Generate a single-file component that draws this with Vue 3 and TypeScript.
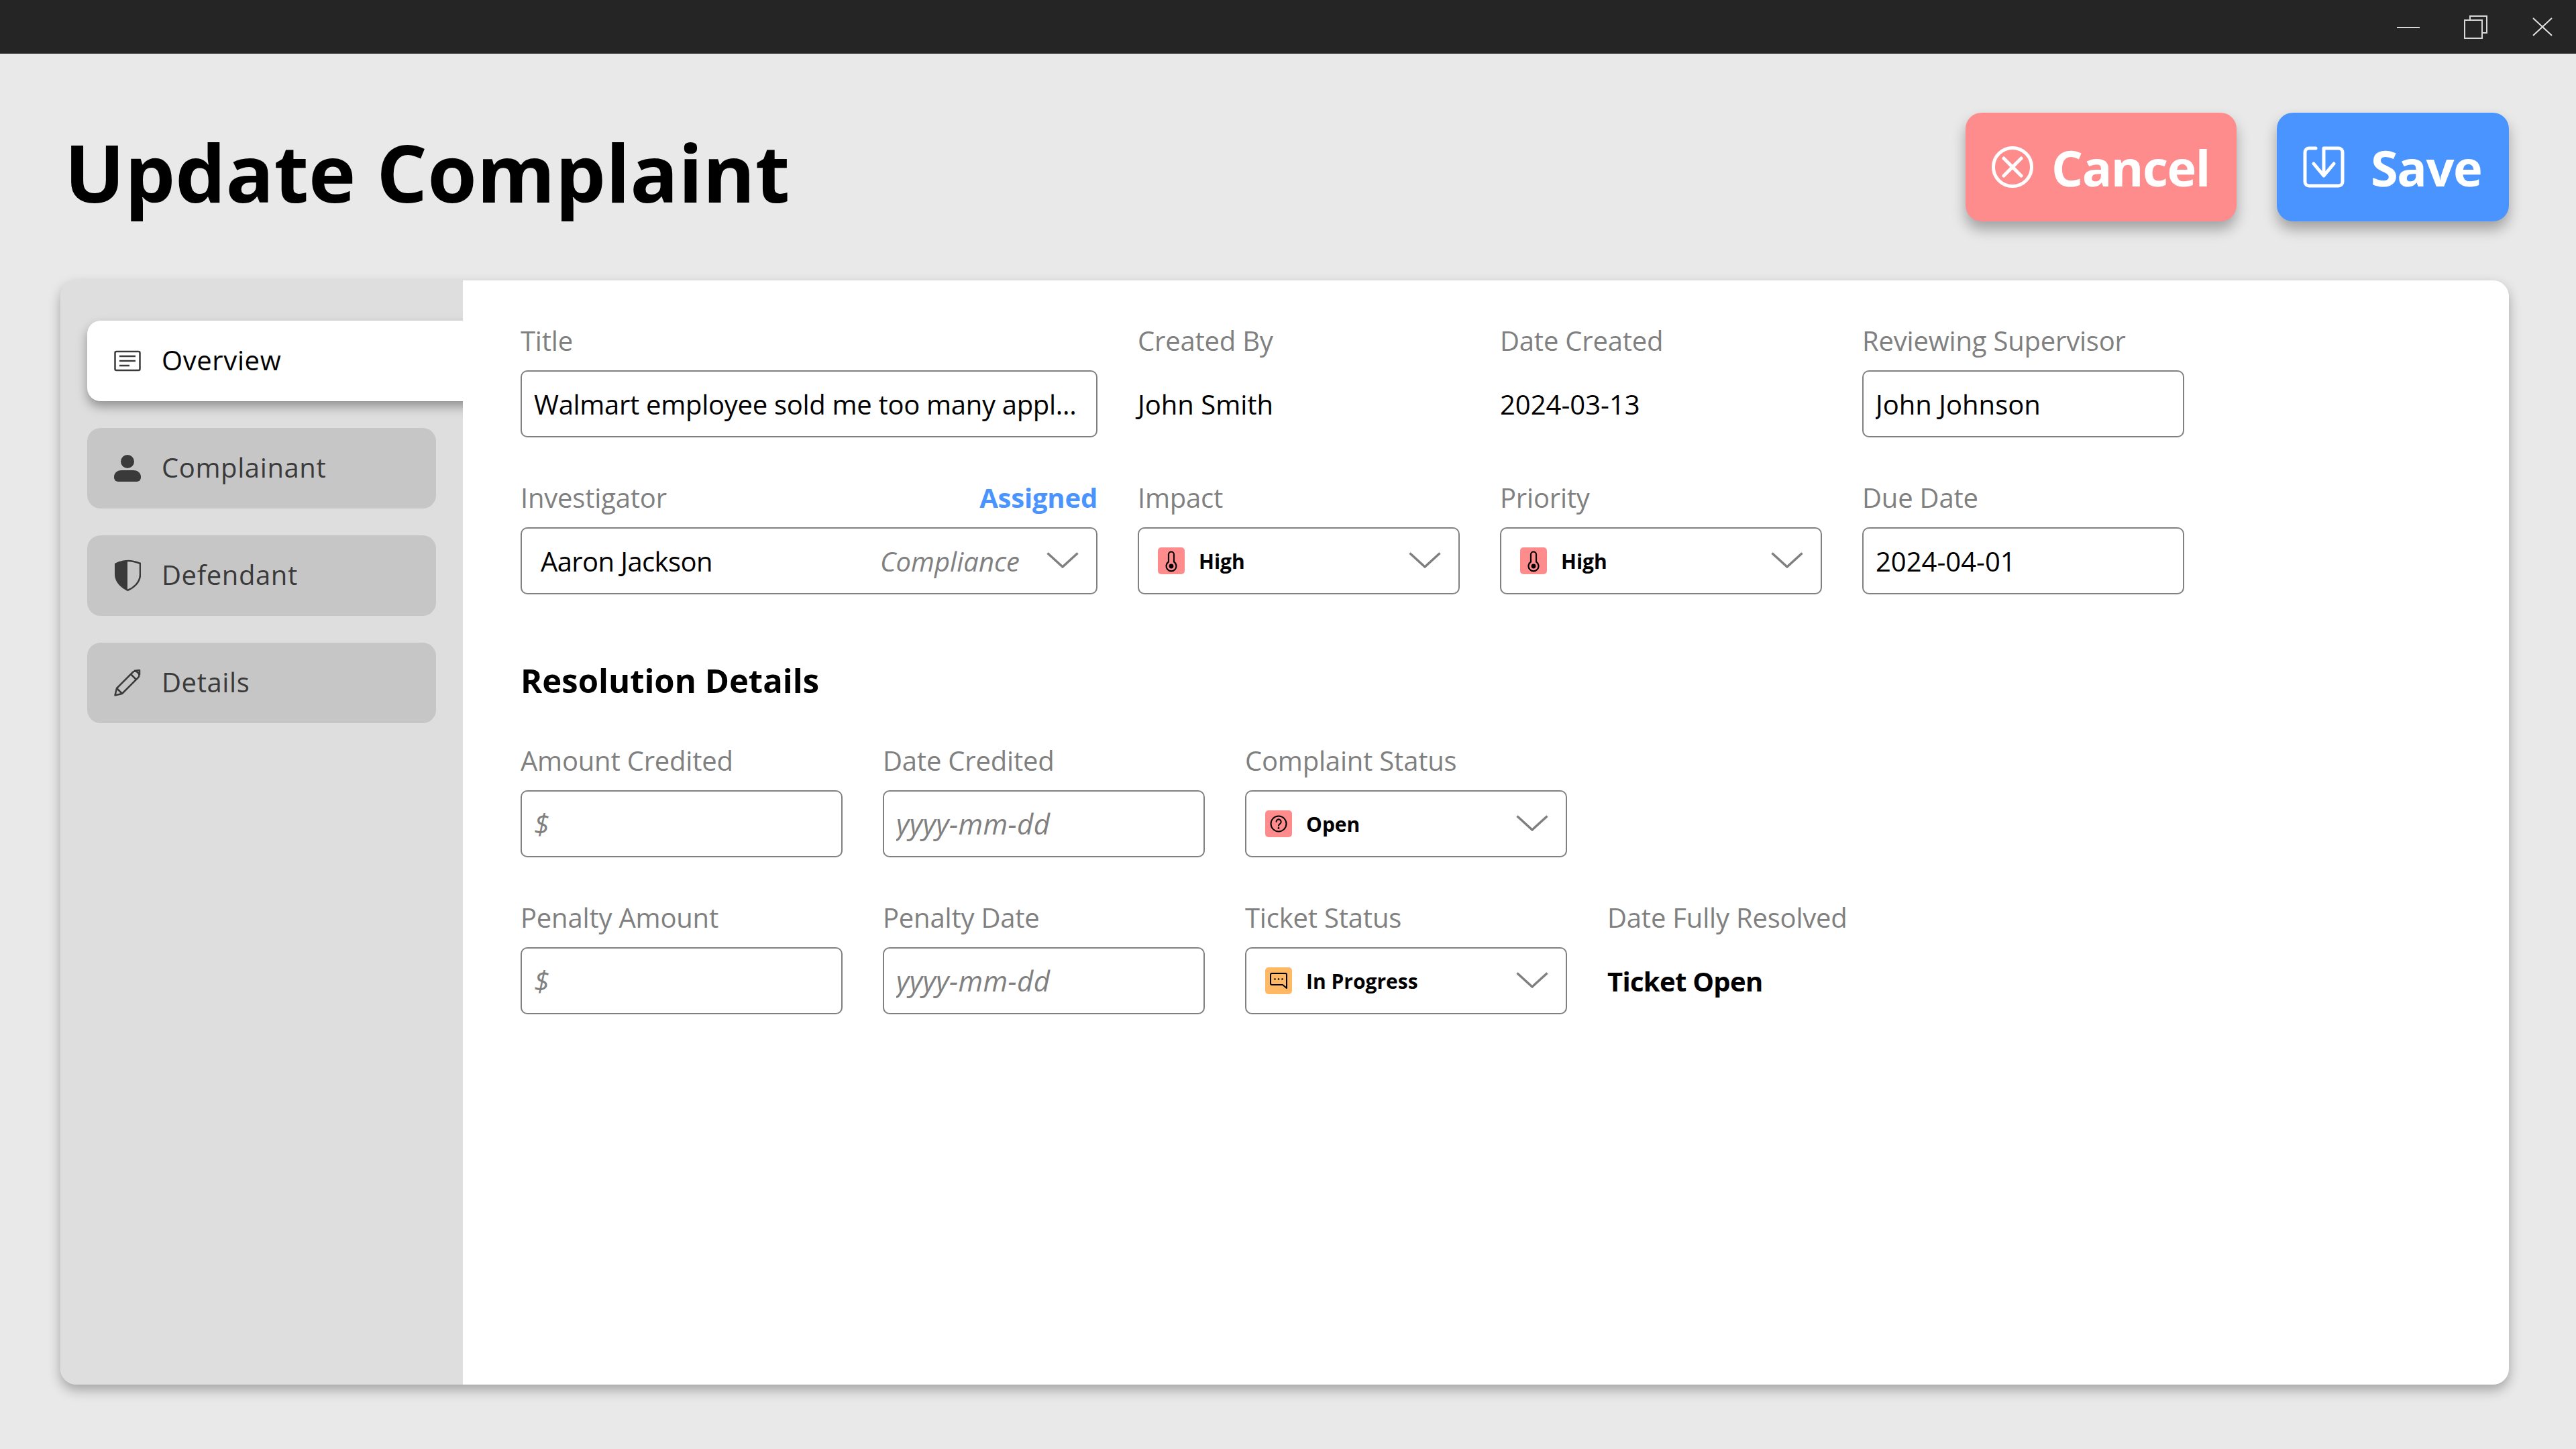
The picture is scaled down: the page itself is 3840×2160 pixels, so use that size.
<template>
  <div class="window">
    <!-- title bar -->
    <div class="titlebar">
      <button class="win-btn" aria-label="Minimize">
        <svg width="36" height="36" viewBox="0 0 36 36"><path d="M1 18H35" stroke="#d8d8d8" stroke-width="2" /></svg>
      </button>
      <button class="win-btn" aria-label="Restore">
        <svg width="36" height="36" viewBox="0 0 36 36" fill="none" stroke="#d8d8d8" stroke-width="2">
          <path d="M10 6V1H35V26H28" />
          <rect x="2" y="7" width="26" height="27" />
        </svg>
      </button>
      <button class="win-btn" aria-label="Close">
        <svg width="36" height="36" viewBox="0 0 36 36"><path d="M4 4L32 30M32 4L4 30" stroke="#e0e0e0" stroke-width="2" fill="none" /></svg>
      </button>
    </div>

    <div class="page">
      <header class="header">
        <h1 class="page-title">Update Complaint</h1>
        <div class="actions">
          <button class="action cancel">
            <svg width="62" height="62" viewBox="0 0 62 62" fill="none" stroke="#fff" stroke-width="5" stroke-linecap="round">
              <circle cx="31" cy="31" r="28.5" />
              <path d="M18 18L44 44M44 18L18 44" />
            </svg>
            <span>Cancel</span>
          </button>
          <button class="action save">
            <svg width="62" height="62" viewBox="0 0 62 62" fill="none" stroke="#fff" stroke-width="5" stroke-linecap="round" stroke-linejoin="round">
              <path d="M19 3H9a6 6 0 0 0-6 6V53a6 6 0 0 0 6 6H53a6 6 0 0 0 6-6V9a6 6 0 0 0-6-6H31V43" />
              <path d="M16 26L31 44L46 26" />
            </svg>
            <span>Save</span>
          </button>
        </div>
      </header>

      <section class="card">
        <nav class="sidebar">
          <div v-for="tab in tabs" :key="tab.name" class="tab" :class="{ active: tab.name === activeTab }">
            <svg v-if="tab.name === 'Overview'" class="tab-icon" width="40" height="40" viewBox="0 0 40 40" fill="none" stroke="currentColor" stroke-width="2.5">
              <rect x="1.5" y="6" width="37" height="28" rx="2" />
              <path d="M8 13H32M8 20H32M8 27H23" />
            </svg>
            <svg v-else-if="tab.name === 'Complainant'" class="tab-icon" width="40" height="40" viewBox="0 0 40 40" fill="currentColor">
              <circle cx="20" cy="10" r="10" />
              <path d="M0 33c0-7 6-10 11-10H29c5 0 11 3 11 10v1a6 6 0 0 1-6 6H6a6 6 0 0 1-6-6Z" />
            </svg>
            <svg v-else-if="tab.name === 'Defendant'" class="tab-icon" width="40" height="48" viewBox="0 0 40 48">
              <path d="M20 1C14 1 6 3 1 6V22C1 35 12 43 20 47Z" fill="currentColor" />
              <path d="M20 2C26 2 34 4 39 6V22C39 35 28 43 20 46" fill="none" stroke="currentColor" stroke-width="2.5" />
            </svg>
            <svg v-else class="tab-icon" width="40" height="40" viewBox="0 0 40 40" fill="none" stroke="currentColor" stroke-width="2.5" stroke-linejoin="round">
              <path d="M1.5 38.5L4 28L28 4C30 2 33 2 35.5 4.5S38 10 36 12L12 36Z" />
              <path d="M4 28L12 36M25 7L33 15M30 2L38 1L38 8" />
            </svg>
            <span>{{ tab.name }}</span>
          </div>
        </nav>

        <main class="content">
          <div class="grid top">
            <div class="field">
              <label>Title</label>
              <input class="box tight" type="text" value="Walmart employee sold me too many appl..." />
            </div>
            <div class="field">
              <label>Created By</label>
              <div class="value">John Smith</div>
            </div>
            <div class="field">
              <label>Date Created</label>
              <div class="value">2024-03-13</div>
            </div>
            <div class="field">
              <label>Reviewing Supervisor</label>
              <input class="box" type="text" value="John Johnson" />
            </div>

            <div class="field">
              <label class="split">Investigator <b class="assigned">Assigned</b></label>
              <div class="box select investigator">
                <span class="person">Aaron Jackson</span>
                <em class="dept">Compliance</em>
                <svg class="chevron" width="48" height="24" viewBox="0 0 48 24"><path d="M1.5 1.5L24 22L46.5 1.5" /></svg>
              </div>
            </div>
            <div v-for="name in ['Impact', 'Priority']" :key="name" class="field">
              <label>{{ name }}</label>
              <div class="box select">
                <span class="badge red">
                  <svg width="40" height="40" viewBox="0 0 40 40" fill="none" stroke="#000" stroke-width="2.2">
                    <path d="M16 21.5V10.5a4 4 0 0 1 8 0V21.5a7.5 7.5 0 1 1-8 0Z" />
                    <circle cx="20" cy="28" r="3.4" fill="#000" stroke="none" />
                  </svg>
                </span>
                <span class="status">High</span>
                <svg class="chevron" width="48" height="24" viewBox="0 0 48 24"><path d="M1.5 1.5L24 22L46.5 1.5" /></svg>
              </div>
            </div>
            <div class="field">
              <label>Due Date</label>
              <input class="box" type="text" value="2024-04-01" />
            </div>
          </div>

          <h2 class="section-title">Resolution Details</h2>

          <div class="grid bottom">
            <div class="field">
              <label>Amount Credited</label>
              <input class="box" type="text" placeholder="$" />
            </div>
            <div class="field">
              <label>Date Credited</label>
              <input class="box" type="text" placeholder="yyyy-mm-dd" />
            </div>
            <div class="field">
              <label>Complaint Status</label>
              <div class="box select">
                <span class="badge red">
                  <svg width="40" height="40" viewBox="0 0 40 40" fill="none" stroke="#000" stroke-width="2">
                    <circle cx="20" cy="20" r="11.5" />
                    <path d="M16.5 17a3.6 3.6 0 1 1 5.6 3c-1.4 1-2.1 1.6-2.1 3" stroke-linecap="round" />
                    <circle cx="20" cy="26.5" r="1.4" fill="#000" stroke="none" />
                  </svg>
                </span>
                <span class="status">Open</span>
                <svg class="chevron" width="48" height="24" viewBox="0 0 48 24"><path d="M1.5 1.5L24 22L46.5 1.5" /></svg>
              </div>
            </div>
            <div class="field"></div>

            <div class="field">
              <label>Penalty Amount</label>
              <input class="box" type="text" placeholder="$" />
            </div>
            <div class="field">
              <label>Penalty Date</label>
              <input class="box" type="text" placeholder="yyyy-mm-dd" />
            </div>
            <div class="field">
              <label>Ticket Status</label>
              <div class="box select">
                <span class="badge orange">
                  <svg width="40" height="40" viewBox="0 0 40 40" fill="none" stroke="#000" stroke-width="2" stroke-linejoin="round">
                    <path d="M10 9H30a2 2 0 0 1 2 2V31L26 26H10a2 2 0 0 1-2-2V11a2 2 0 0 1 2-2Z" />
                    <circle cx="14.5" cy="17.5" r="1.3" fill="#000" stroke="none" />
                    <circle cx="20" cy="17.5" r="1.3" fill="#000" stroke="none" />
                    <circle cx="25.5" cy="17.5" r="1.3" fill="#000" stroke="none" />
                  </svg>
                </span>
                <span class="status">In Progress</span>
                <svg class="chevron" width="48" height="24" viewBox="0 0 48 24"><path d="M1.5 1.5L24 22L46.5 1.5" /></svg>
              </div>
            </div>
            <div class="field">
              <label>Date Fully Resolved</label>
              <div class="value strong">Ticket Open</div>
            </div>
          </div>
        </main>
      </section>
    </div>
  </div>
</template>

<script setup lang="ts">
import { ref } from 'vue'

const activeTab = ref('Overview')

const tabs = [
  { name: 'Overview' },
  { name: 'Complainant' },
  { name: 'Defendant' },
  { name: 'Details' },
]
</script>

<style>
html,
body {
  margin: 0;
  background: #e9e9e9;
}
</style>

<style scoped>
.window {
  width: 3840px;
  height: 2160px;
  display: flex;
  flex-direction: column;
  font-family: "Open Sans", "Noto Sans", sans-serif;
  color: #000;
}

.titlebar {
  height: 80px;
  background: #252525;
  display: flex;
  justify-content: flex-end;
}

.win-btn {
  width: 100px;
  height: 80px;
  padding: 2px 0 0;
  border: none;
  background: none;
  display: flex;
  align-items: center;
  justify-content: center;
}

.page {
  flex: 1;
  display: flex;
  flex-direction: column;
  padding: 0 100px 96px 90px;
}

.header {
  height: 338px;
  display: flex;
  justify-content: space-between;
  align-items: flex-start;
  padding-top: 88px;
  box-sizing: border-box;
}

.page-title {
  margin: 7px 0 0 6px;
  font-size: 119px;
  line-height: 162px;
  font-weight: 700;
}

.actions {
  display: flex;
  gap: 60px;
}

.action {
  height: 162px;
  border: none;
  border-radius: 24px;
  display: flex;
  align-items: center;
  color: #fff;
  font-family: inherit;
  font-size: 74px;
  font-weight: 700;
  letter-spacing: -1.5px;
  padding: 0 0 0 39px;
  box-shadow: 0 12px 20px rgba(0, 0, 0, 0.3);
}

.cancel {
  width: 404px;
  gap: 27px;
  background: #ff8c8c;
}

.save {
  width: 346px;
  gap: 39px;
  background: #4a94ff;
}

.card {
  flex: 1;
  display: flex;
  border-radius: 24px;
  box-shadow: 0 8px 18px rgba(0, 0, 0, 0.3);
  overflow: hidden;
}

.sidebar {
  width: 600px;
  flex-shrink: 0;
  box-sizing: border-box;
  background: #dedede;
  padding: 60px 0 0 40px;
  display: flex;
  flex-direction: column;
  gap: 40px;
  overflow: hidden;
}

.tab {
  width: 520px;
  height: 120px;
  box-sizing: border-box;
  padding-left: 40px;
  padding-bottom: 3px;
  border-radius: 20px;
  background: #c6c6c6;
  color: #3a3a3a;
  display: flex;
  align-items: center;
  font-size: 40px;
  letter-spacing: 0.6px;
}

.tab.active {
  width: 600px;
  background: #fff;
  color: #000;
  box-shadow: 0 8px 16px rgba(0, 0, 0, 0.35);
}

.tab-icon {
  flex-shrink: 0;
  margin-right: 31px;
  color: #3a3a3a;
  transform: translateY(1px);
}

.content {
  flex: 1;
  background: #fff;
  padding: 64px 0 0 86px;
}

.grid {
  display: grid;
  column-gap: 60px;
  row-gap: 64px;
}

.grid.top {
  grid-template-columns: 860px 480px 480px 480px;
}

.grid.bottom {
  grid-template-columns: repeat(4, 480px);
}

.field {
  display: flex;
  flex-direction: column;
  min-height: 170px;
}

.field label {
  height: 70px;
  font-size: 40px;
  line-height: 52px;
  letter-spacing: -0.2px;
  color: #808080;
}

.split {
  display: flex;
  justify-content: space-between;
}

.assigned {
  color: #4a94ff;
  font-weight: 700;
}

.box {
  width: 100%;
  height: 100px;
  box-sizing: border-box;
  border: 2px solid #808080;
  border-radius: 10px;
  background: #fff;
  font-family: inherit;
  font-size: 40px;
  color: #000;
  padding: 0 0 0 18px;
  outline: none;
}

.tight {
  letter-spacing: -0.3px;
}

input.box::placeholder {
  color: #808080;
  font-size: 42px;
  font-style: italic;
  letter-spacing: 0.4px;
}

.select {
  display: flex;
  align-items: center;
  padding: 0 26px 0 28px;
}

.person {
  flex: 1;
  letter-spacing: -0.6px;
}

.dept {
  color: #808080;
  margin-right: 40px;
}

.chevron {
  margin-left: auto;
  fill: none;
  stroke: #808080;
  stroke-width: 3.5;
  flex-shrink: 0;
  transform: translateY(-1px);
}

.badge {
  width: 40px;
  height: 40px;
  border-radius: 5px;
  flex-shrink: 0;
  margin-right: 21px;
}

.badge svg {
  display: block;
}

.red {
  background: #ff8c8c;
}

.orange {
  background: #ffb964;
}

.status {
  font-size: 30px;
  font-weight: 700;
}

.value {
  height: 100px;
  display: flex;
  align-items: center;
  font-size: 40px;
}

.value.strong {
  font-weight: 700;
  letter-spacing: -0.7px;
}

.section-title {
  margin: 0;
  height: 222px;
  box-sizing: border-box;
  padding-top: 94px;
  font-size: 49px;
  line-height: 68px;
  font-weight: 700;
}
</style>
